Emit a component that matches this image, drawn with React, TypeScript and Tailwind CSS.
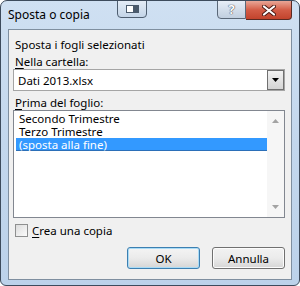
import { useState } from 'react';

const font = { fontFamily: '"Noto Sans", "Liberation Sans", sans-serif' };

function DropArrow() {
  return (
    <svg width="7" height="4" viewBox="0 0 7 4">
      <path d="M0 0h7L3.5 4z" fill="#000" />
    </svg>
  );
}

export default function App() {
  const [selected, setSelected] = useState(2);
  const [copy, setCopy] = useState(false);
  const sheets = ['Secondo Trimestre', 'Terzo Trimestre', '(sposta alla fine)'];

  return (
    <div className="w-[300px] h-[286px] bg-white text-[11.5px] text-black" style={font}>
      <div className="w-[300px] h-[286px] flex flex-col border border-[#3d4b5c] rounded-t-[7px] rounded-b-[6px] bg-gradient-to-b from-[#cfe0f2] via-[#c3d7ed] to-[#bcd2ea] overflow-hidden">
        {/* Title bar */}
        <div className="h-[28px] flex items-start shrink-0">
          <span className="w-[116px] pl-[7px] pt-[6px] text-[12px] leading-[16px] text-black">Sposta o copia</span>
          <div className="w-[30px] h-[18px] mt-[-1px] border border-[#4e5e70] rounded-b-[4px] bg-gradient-to-b from-[#e3ecf6] to-[#c4d5e8] flex items-center justify-center">
            <div className="w-[13px] h-[8px] border border-[#4a5a6c] bg-white flex justify-end">
              <div className="w-[5px] h-full bg-[#4a5a6c]" />
            </div>
          </div>
          <div className="flex-1" />
          <div className="w-[29px] h-[19px] mt-[-1px] border border-[#5a6878] rounded-bl-[4px] bg-gradient-to-b from-[#e7eef7] via-[#d3deeb] to-[#c1cfdf] flex items-center justify-center text-[13px] font-bold text-white [text-shadow:0_0_1px_#334,0_0_1px_#334]">
            ?
          </div>
          <div className="w-[46px] h-[20px] mt-[-1px] mr-[7px] border border-[#5a2a22] border-l-0 rounded-br-[4px] bg-gradient-to-b from-[#e8a697] via-[#d35c46] to-[#c2432c] flex items-center justify-center">
            <svg width="14" height="11" viewBox="0 0 14 11">
              <path d="M2 1.5l10 8M12 1.5l-10 8" stroke="#4a1a14" strokeWidth="4" strokeLinecap="round" />
              <path d="M2 1.5l10 8M12 1.5l-10 8" stroke="#fff" strokeWidth="2.2" strokeLinecap="round" />
            </svg>
          </div>
        </div>

        {/* Client area */}
        <div className="mx-[7px] h-[251px] border border-[#7f8fa0] bg-[#f0f0f0] pl-[4px] pr-[6px] pt-[7px] flex flex-col">
          <div className="leading-[15px] pl-[2px]">Sposta i fogli selezionati</div>
          <div className="leading-[15px] pl-[2px] mt-[2px]">
            <span className="underline underline-offset-2">N</span>ella cartella:
          </div>
          <div className="h-[22px] border border-[#a5a5a5] bg-white flex items-center">
            <span className="flex-1 pl-[4px] leading-[15px]">Dati 2013.xlsx</span>
            <div className="w-[17px] h-[20px] border border-[#707070] bg-gradient-to-b from-[#f2f2f2] to-[#d4d4d4] flex items-center justify-center">
              <DropArrow />
            </div>
          </div>
          <div className="leading-[15px] pl-[2px] mt-[4px]">
            <span className="underline underline-offset-2">P</span>rima del foglio:
          </div>
          <div className="h-[108px] border border-[#828790] bg-white flex">
            <div className="flex-1 pt-[1px] pl-[2px]">
              {sheets.map((s, i) => (
                <div
                  key={s}
                  onClick={() => setSelected(i)}
                  className={
                    i === selected
                      ? 'h-[13px] leading-[13px] pl-[3px] bg-[#3399ff] text-white shadow-[inset_0_-1px_0_#2b6fb8]'
                      : 'h-[13px] leading-[13px] pl-[3px]'
                  }
                >
                  {s}
                </div>
              ))}
            </div>
            <div className="w-[17px] bg-[#f6f6f6] flex flex-col items-center justify-between py-[8px]">
              <svg width="7" height="4" viewBox="0 0 7 4">
                <path d="M3.5 0L7 4H0z" fill="#a3a3a3" />
              </svg>
              <svg width="7" height="4" viewBox="0 0 7 4">
                <path d="M0 0h7L3.5 4z" fill="#a3a3a3" />
              </svg>
            </div>
          </div>
          <label className="flex items-center mt-[6px] h-[13px] pl-[2px]">
            <input type="checkbox" checked={copy} onChange={() => setCopy(!copy)} className="hidden" />
            <span className="w-[13px] h-[13px] border border-[#8e8f8f] bg-gradient-to-br from-[#dcdcdc] to-[#fbfbfb]" />
            <span className="ml-[4px] leading-[15px]">
              <span className="underline underline-offset-2">C</span>rea una copia
            </span>
          </label>
          <div className="flex justify-end gap-[12px] mt-[10px]">
            <button className="w-[73px] h-[22px] border border-[#3c7fb1] rounded-[3px] bg-gradient-to-b from-[#f4f4f4] via-[#ebebeb] to-[#d5d5d5] leading-[15px] shadow-[inset_0_0_0_1px_#a9dbf6]">
              OK
            </button>
            <button className="w-[73px] h-[22px] border border-[#707070] rounded-[3px] bg-gradient-to-b from-[#f2f2f2] via-[#ebebeb] to-[#d6d6d6] leading-[15px] shadow-[inset_0_0_0_1px_#fcfcfc]">
              Annulla
            </button>
          </div>
        </div>
      </div>
    </div>
  );
}
